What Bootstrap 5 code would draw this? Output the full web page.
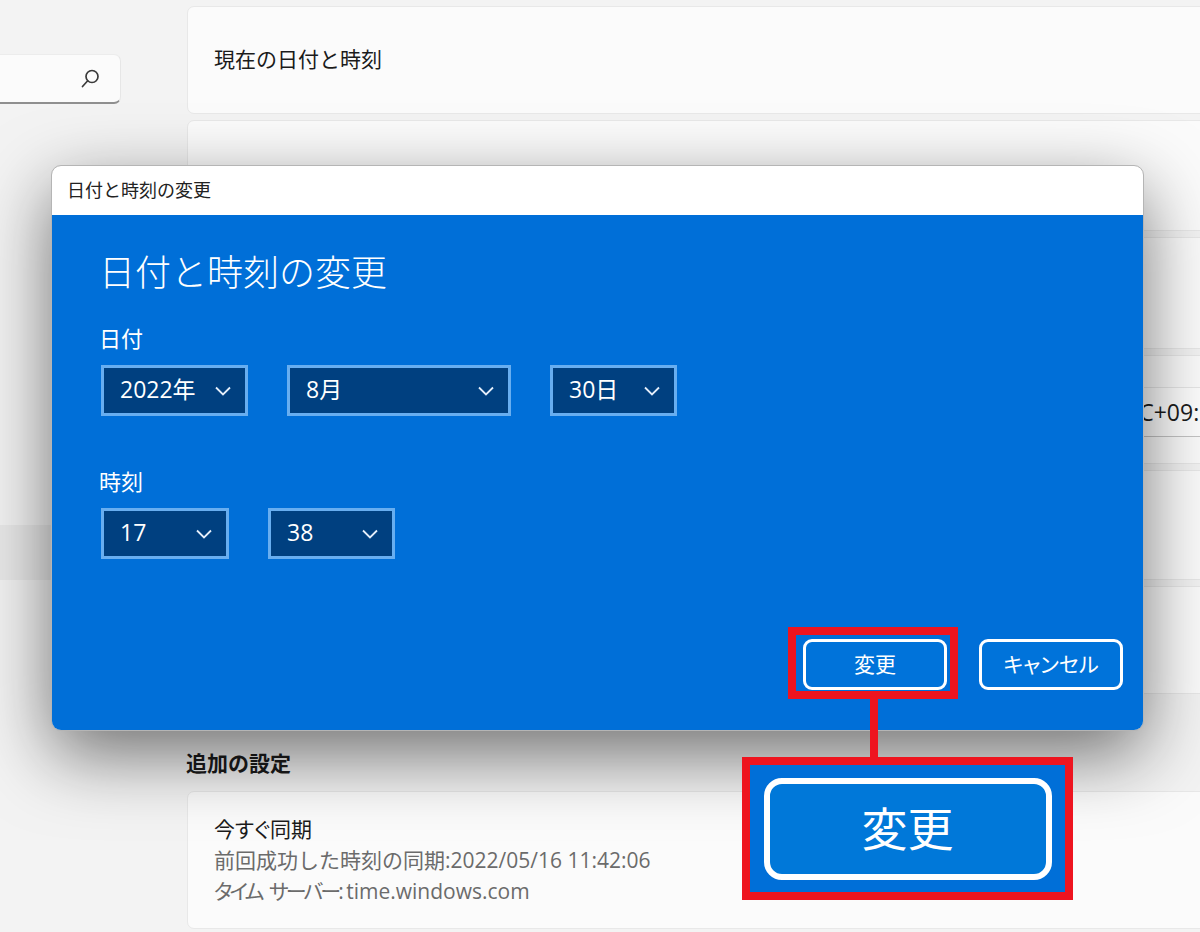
<!DOCTYPE html>
<html lang="ja">

<head>
  <meta charset="UTF-8" />
  <meta name="viewport" content="width=device-width, initial-scale=1.0" />
  <title>日付と時刻の変更</title>

  <link href="https://cdn.jsdelivr.net/npm/bootstrap@5.3.0/dist/css/bootstrap.min.css" rel="stylesheet">
  <style>
    html, body {
      height: 932px;
      overflow: hidden;
    }

    body {
      background: #f3f3f3;
      font-family: "Open Sans", "Noto Sans CJK JP", sans-serif;
      color: #1b1b1b;
      font-size: 21px;
    }

    .page-shell {
      position: relative;
      width: 1200px;
      height: 932px;
      overflow: hidden;
    }

    /* narrow kana, the way the UI font sets them */
    .kana-tight {
      font-feature-settings: "palt";
    }

    .kana-narrow {
      letter-spacing: -2.9px;
      word-spacing: 5px;
    }

    /* settings page behind the dialog */
    .side-col {
      width: 187px;
      flex: none;
    }

    .search-box {
      width: 121px;
      height: 50px;
      margin-top: 54px;
      padding-right: 19px;
      background: #fbfbfb;
      border-bottom: 2px solid #8f8f8f;
      border-right: 1px solid #e6e6e6;
      border-top: 1px solid #ececec;
      border-radius: 0 7px 7px 0;
    }

    .side-active {
      width: 121px;
      height: 55px;
      margin-top: 421px;
      background: #e9e9e9;
      border-radius: 0 7px 7px 0;
    }

    .main-col {
      width: 1100px;
      flex: none;
      padding-top: 6px;
    }

    .set-card {
      background: #fbfbfb;
      border: 1px solid #e8e8e8;
      border-radius: 7px;
      padding-left: 26px;
      margin-bottom: 6px;
    }

    .h-108 { height: 108px; }
    .h-111 { height: 111px; }
    .h-112 { height: 112px; }
    .h-109 { height: 109px; }
    .h-110 { height: 110px; }
    .h-138 { height: 138px; }

    .tz-box {
      height: 50px;
      margin: 31px 0 0 887px;
      padding-left: 1px;
      background: #fdfdfd;
      border: 1px solid #e6e6e6;
      border-bottom-color: #c4c4c4;
      font-size: 23px;
      white-space: nowrap;
      flex: 1;
    }

    .extra-title {
      font-size: 21px;
      font-weight: 700;
      line-height: 30px;
      margin: 54px 0 13px -1px;
    }

    .sync-lines {
      line-height: 31px;
    }

    .muted-line {
      color: #6b6b6b;
    }

    /* dialog window */
    .dialog-win {
      position: absolute;
      left: 52px;
      top: 166px;
      width: 1091px;
      height: 564px;
      border-radius: 9px;
      overflow: hidden;
      outline: 1px solid #b5b5b5;
    }

    .dialog-shadow {
      position: absolute;
      left: 52px;
      top: 166px;
      width: 1091px;
      height: 564px;
      border-radius: 9px;
      box-shadow: 0 24px 72px rgba(0, 0, 0, .55);
    }

    .win-title {
      height: 49px;
      padding-left: 15px;
      background: #fff;
      font-size: 18px;
      color: #222;
    }

    .win-body {
      position: relative;
      height: 515px;
      background: #006fd8;
      color: #fff;
      padding: 34px 20px 0 47px;
    }

    .win-heading {
      font-size: 36px;
      font-weight: 300;
      line-height: 48px;
      margin: 0 0 26px 0;
      white-space: nowrap;
    }

    .field-label {
      font-size: 22px;
      line-height: 30px;
      margin-bottom: 12px;
    }

    .drop-row {
      margin-left: 2px;
      margin-bottom: 50px;
      gap: 39px;
    }

    .drop-box {
      height: 51px;
      padding: 0 14px 0 16px;
      background: #004080;
      border: 3px solid #68aef0;
      font-size: 23px;
      color: #fff;
    }

    .drop-box span {
      position: relative;
      top: -1px;
    }

    .w-147 { width: 147px; }
    .w-224 { width: 224px; }
    .w-128 { width: 128px; }
    .w-127 { width: 127px; }

    .dlg-btn {
      width: 144px;
      height: 51px;
      background: #0073da;
      border: 3px solid #fff;
      border-radius: 9px;
      color: #fff;
      font-size: 21px;
      padding: 0;
    }

    .dlg-actions {
      position: absolute;
      right: 20px;
      top: 424px;
      gap: 32px;
    }

    /* red annotation */
    .mark-small {
      position: absolute;
      left: 788px;
      top: 627px;
      width: 170px;
      height: 72px;
      border: 8px solid #ee141f;
    }

    .mark-line {
      position: absolute;
      left: 870px;
      top: 699px;
      width: 8px;
      height: 60px;
      background: #ee141f;
    }

    .mark-big {
      position: absolute;
      left: 742px;
      top: 757px;
      width: 331px;
      height: 143px;
      border: 8px solid #ee141f;
      background: #006fd8;
    }

    .big-btn {
      width: 288px;
      height: 102px;
      background: #0078d9;
      border: 6px solid #fff;
      border-radius: 18px;
      color: #fff;
      font-size: 46px;
    }
  </style>
</head>

<body>
  <div class="page-shell">
    <div class="d-flex">
      <div class="side-col">
        <div class="search-box d-flex align-items-center justify-content-end">
          <svg width="22" height="22" viewBox="0 0 22 22" fill="none" stroke="#3a3a3a" stroke-width="1.7" stroke-linecap="round">
            <circle cx="13" cy="8.5" r="6" />
            <path d="M8.7 12.8 3.5 18.5" />
          </svg>
        </div>
        <div class="side-active"></div>
      </div>

      <div class="main-col">
        <div class="set-card h-108 d-flex align-items-center">現在の日付と時刻</div>
        <div class="set-card h-111"></div>
        <div class="set-card h-112"></div>
        <div class="set-card h-109 d-flex align-items-start">
          <div class="tz-box d-flex align-items-center">(UTC+09:</div>
        </div>
        <div class="set-card h-110"></div>
        <div class="set-card h-108"></div>
        <div class="extra-title">追加の設定</div>
        <div class="set-card h-138 d-flex align-items-center">
          <div class="sync-lines">
            <div class="kana-tight">今すぐ同期</div>
            <div class="muted-line">前回成功した時刻の同期:2022/05/16 11:42:06</div>
            <div class="muted-line kana-tight"><span class="kana-narrow">タイム サーバー:</span> time.windows.com</div>
          </div>
        </div>
      </div>
    </div>

    <div class="dialog-shadow"></div>
    <div class="dialog-win">
      <div class="win-title d-flex align-items-center">日付と時刻の変更</div>
      <div class="win-body">
        <h1 class="win-heading">日付と時刻の変更</h1>

        <div class="field-label">日付</div>
        <div class="drop-row d-flex">
          <div class="drop-box w-147 d-flex align-items-center justify-content-between">
            <span>2022年</span>
            <svg width="16" height="10" viewBox="0 0 16 10" fill="none" stroke="#e4eefa" stroke-width="1.8"><path d="M1 1.5 8 8.5 15 1.5" /></svg>
          </div>
          <div class="drop-box w-224 d-flex align-items-center justify-content-between">
            <span>8月</span>
            <svg width="16" height="10" viewBox="0 0 16 10" fill="none" stroke="#e4eefa" stroke-width="1.8"><path d="M1 1.5 8 8.5 15 1.5" /></svg>
          </div>
          <div class="drop-box w-127 d-flex align-items-center justify-content-between">
            <span>30日</span>
            <svg width="16" height="10" viewBox="0 0 16 10" fill="none" stroke="#e4eefa" stroke-width="1.8"><path d="M1 1.5 8 8.5 15 1.5" /></svg>
          </div>
        </div>

        <div class="field-label">時刻</div>
        <div class="drop-row d-flex">
          <div class="drop-box w-128 d-flex align-items-center justify-content-between">
            <span>17</span>
            <svg width="16" height="10" viewBox="0 0 16 10" fill="none" stroke="#e4eefa" stroke-width="1.8"><path d="M1 1.5 8 8.5 15 1.5" /></svg>
          </div>
          <div class="drop-box w-127 d-flex align-items-center justify-content-between">
            <span>38</span>
            <svg width="16" height="10" viewBox="0 0 16 10" fill="none" stroke="#e4eefa" stroke-width="1.8"><path d="M1 1.5 8 8.5 15 1.5" /></svg>
          </div>
        </div>

        <div class="dlg-actions d-flex">
          <button type="button" class="btn dlg-btn">変更</button>
          <button type="button" class="btn dlg-btn kana-tight">キャンセル</button>
        </div>
      </div>
    </div>

    <div class="mark-small"></div>
    <div class="mark-line"></div>
    <div class="mark-big d-flex align-items-center justify-content-center">
      <div class="big-btn d-flex align-items-center justify-content-center">変更</div>
    </div>
  </div>

  <script src="https://cdn.jsdelivr.net/npm/bootstrap@5.3.0/dist/js/bootstrap.bundle.min.js"></script>
</body>

</html>
